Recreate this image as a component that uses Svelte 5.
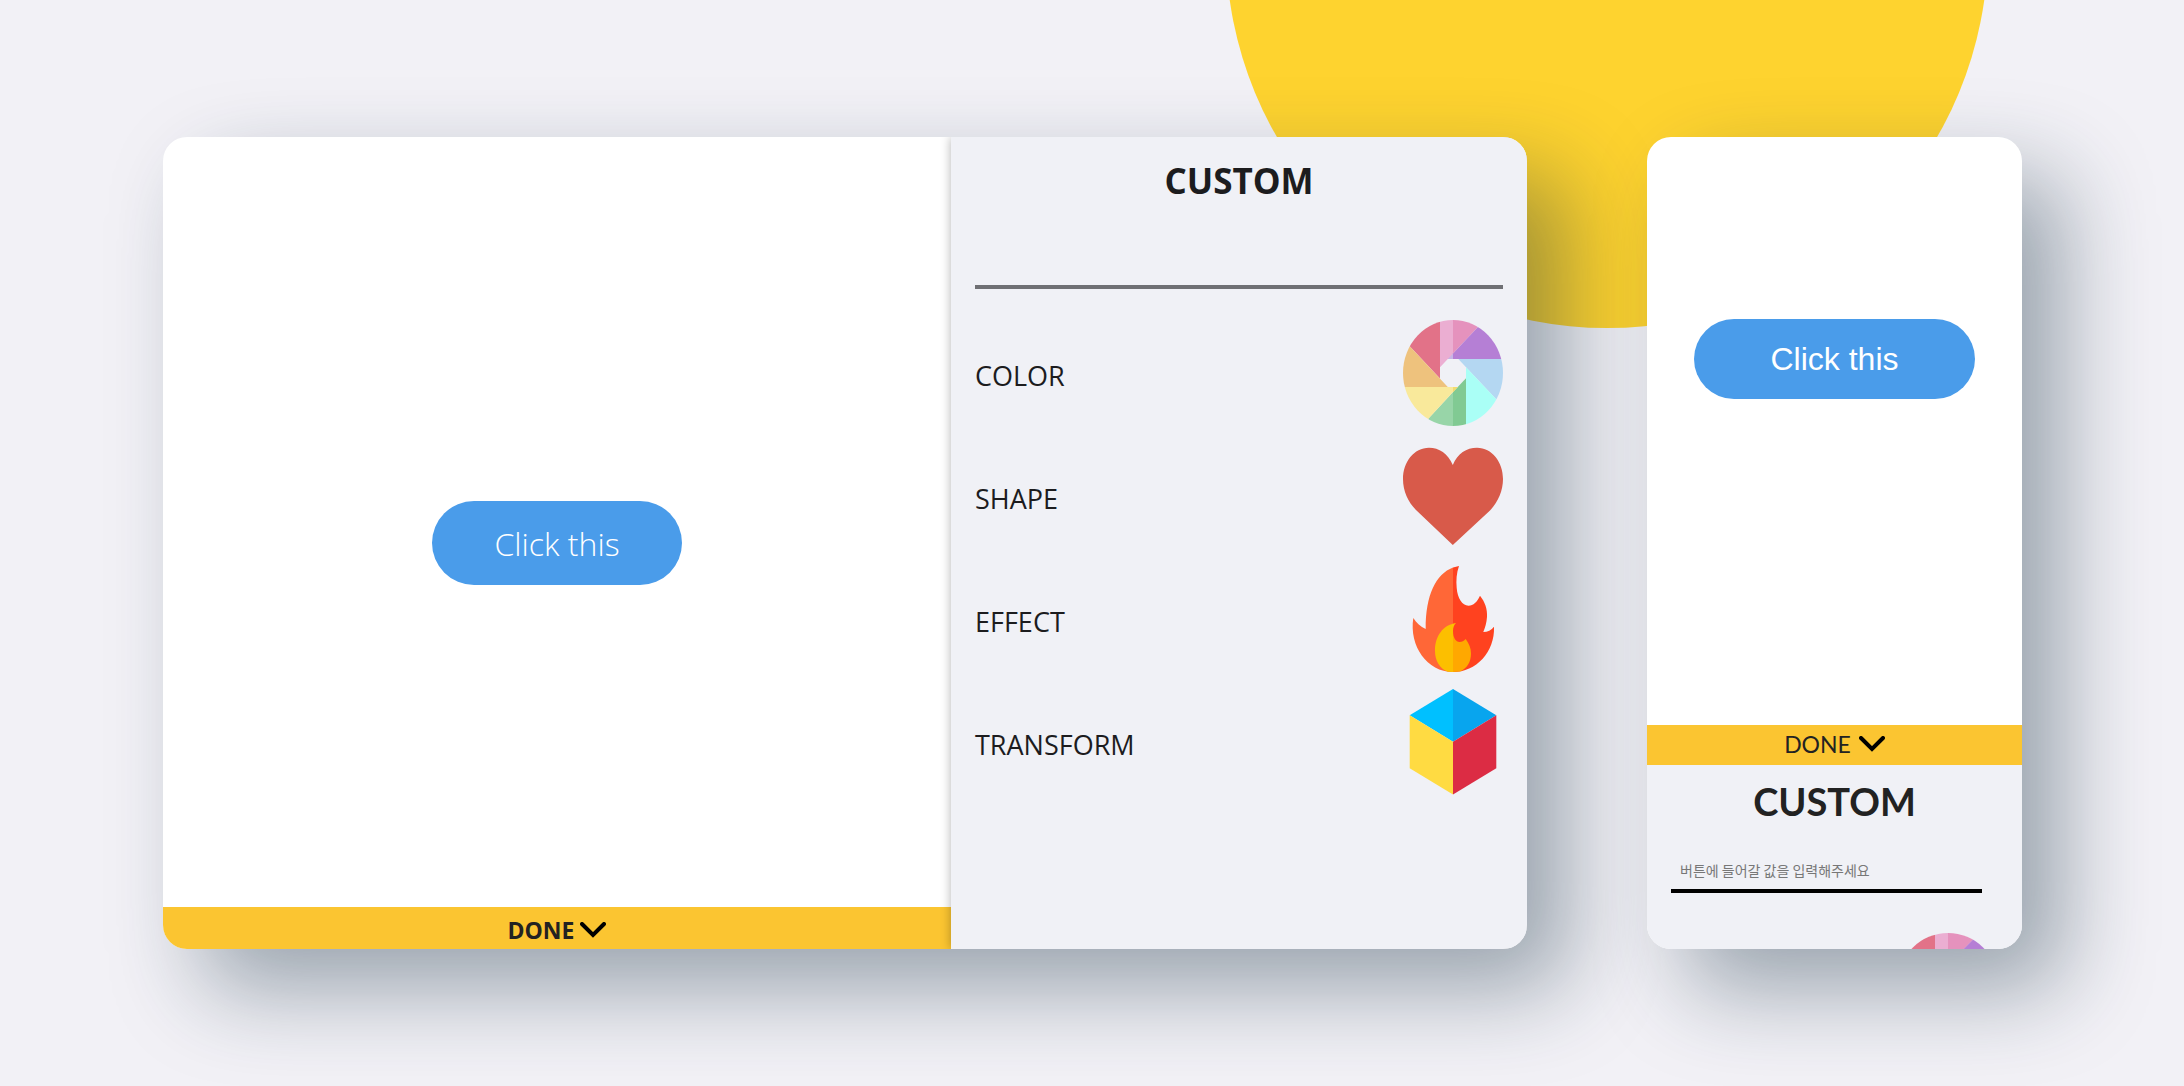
<script>
  let desktopLabel = $state('');
  let phoneLabel = $state('');

  const options = ['COLOR', 'SHAPE', 'EFFECT', 'TRANSFORM'];
</script>

{#snippet aperture()}
  <svg class="icon round" viewBox="0 0 100 106" preserveAspectRatio="none" aria-hidden="true">
    <path fill="#e27288" d="M0 0H37V58.5L6.7 26.3L0 19Z" />
    <path fill="#ebaed2" d="M37 0H50V39H44.8L37 47.3Z" />
    <path fill="#e592bd" d="M50 0H82L74.7 7.3L50 33.5Z" />
    <path fill="#c8b4e6" d="M50 33.5V39H44.8Z" />
    <path fill="#b57fd5" d="M50 33.5L82 -0.5H100V39H50Z" />
    <path fill="#b4d7f2" d="M55.3 39H100V86.5L93 79Z" />
    <path fill="#aafff6" d="M63 47.2L93 79L100 86.4V106H63Z" />
    <path fill="#81ca93" d="M63 58.3V106H50V72Z" />
    <path fill="#98d5a8" d="M50 72V106H18.5L25.3 98.7Z" />
    <path fill="#f9e99b" d="M0 67H50V72L25.3 98.7L18.5 106H0Z" />
    <path fill="#f2dc70" d="M50 67H54.9L50 72.2Z" />
    <path fill="#eec27d" d="M0 19L6.7 26.3L44.8 67H0Z" />
  </svg>
{/snippet}

{#snippet heart()}
  <svg class="icon" viewBox="0 0 100 106" aria-hidden="true">
    <path
      fill="#d85a4a"
      d="M49.8 22C45 10.500 36 4.700 26 4.700C11 4.700 0 19 0 36C0 48 5 59 13 67L49.800 102L87 67.500C95 59 100 48 100 36C100 19 89 4.700 74 4.700C63.500 4.700 54.500 10.500 49.800 22Z"
    />
  </svg>
{/snippet}

{#snippet flame()}
  <svg class="icon" viewBox="0 0 100 106" aria-hidden="true">
    <path
      fill="#ff421f"
      d="M50 1.500L56 0C53.500 7 53 14 53.700 22C54.500 32 59 39.700 65.500 39.700C70.500 39.700 74 36 77 29.700C82 36 84.500 43 84 51C83.600 57 82 62 80.300 66C84.500 66 88.500 64 91 60.700C92 86 73 106 50 106Z"
    />
    <path
      fill="#ff6737"
      d="M50 1.500C33 8 22.500 29 22.700 63C17.500 60.500 13.500 57 10.300 52C6 80 24 106 50 106Z"
    />
    <path
      fill="#ffa800"
      d="M50 58V65C50 72 53 76 56.500 76C59 76 61 75 62.700 73C66 77.500 68 82 68 87.500C68 96 64 102.500 57 105.500L50 106Z"
    />
    <path fill="#ff421f" d="M50 57.500L53.500 57C51.500 59 50.500 61 50 63Z" />
    <path fill="#fcbf00" d="M53 57C40 59 32 70 32 85C32 95 37 103 45 105.700L50 106V65C50 61.500 51 59 53 57Z" />
  </svg>
{/snippet}

{#snippet cube()}
  <svg class="icon" viewBox="0 0 100 106" aria-hidden="true">
    <path fill="#00c0ff" d="M50 0V52.700L6.700 26.300Z" />
    <path fill="#08a5ee" d="M50 0L93.300 26.300L50 52.700Z" />
    <path fill="#ffdb42" d="M6.700 26.300L50 52.700V105.500L6.700 79.300Z" />
    <path fill="#dc2c44" d="M93.300 26.300L50 52.700V105.500L93.300 79.300Z" />
  </svg>
{/snippet}

{#snippet chevron()}
  <svg class="chevron" viewBox="0 0 26 16" aria-hidden="true">
    <path d="M2 2L13 13L24 2" fill="none" stroke="#000" stroke-width="4" stroke-linecap="round" />
  </svg>
{/snippet}

<main class="page">
  <div class="sun"></div>

  <section class="card desktop">
    <div class="stage">
      <div class="preview">
        <button class="sample" type="button">{desktopLabel || 'Click this'}</button>
      </div>
      <button class="done" type="button">DONE {@render chevron()}</button>
    </div>
    <aside class="panel">
      <h2>CUSTOM</h2>
      <input type="text" aria-label="Button text" bind:value={desktopLabel} />
      <ul>
        {#each options as option}
          <li>
            <button class="option" type="button">
              <span>{option}</span>
              {#if option === 'COLOR'}
                {@render aperture()}
              {:else if option === 'SHAPE'}
                {@render heart()}
              {:else if option === 'EFFECT'}
                {@render flame()}
              {:else}
                {@render cube()}
              {/if}
            </button>
          </li>
        {/each}
      </ul>
    </aside>
  </section>

  <section class="card phone">
    <div class="preview">
      <button class="sample" type="button">{phoneLabel || 'Click this'}</button>
    </div>
    <button class="done" type="button">DONE {@render chevron()}</button>
    <aside class="panel">
      <h2>CUSTOM</h2>
      <input
        type="text"
        aria-label="Button text"
        placeholder="버튼에 들어갈 값을 입력해주세요"
        bind:value={phoneLabel}
      />
      <button class="option" type="button" aria-label="Color">{@render aperture()}</button>
    </aside>
  </section>
</main>

<style>
  :global(body) {
    margin: 0;
    background: #f2f1f6;
  }

  .page {
    position: relative;
    isolation: isolate;
    overflow: hidden;
    box-sizing: border-box;
    min-height: 100vh;
    padding: 137px 162px 137px 163px;
    display: grid;
    grid-template-columns: minmax(0, 1364fr) minmax(0, 375fr);
    gap: 120px;
    background: #f2f1f6;
    color: #1c1c1e;
    font-family: 'Open Sans', 'Noto Sans', 'Noto Sans CJK KR', sans-serif;
  }

  .sun {
    position: absolute;
    z-index: -1;
    top: -434px;
    right: 196px;
    width: 762px;
    height: 762px;
    border-radius: 50%;
    background: #fed32f;
  }

  .card {
    overflow: hidden;
    border-radius: 24px;
    background: #fff;
    box-shadow: 40px 40px 90px rgba(20, 47, 65, 0.4);
  }

  button {
    border: 0;
    padding: 0;
    font: inherit;
    color: inherit;
    cursor: pointer;
  }

  .desktop {
    display: grid;
    grid-template-columns: minmax(0, 788fr) minmax(0, 576fr);
  }

  .stage,
  .phone {
    display: flex;
    flex-direction: column;
  }

  .preview {
    flex: 1;
    display: flex;
    justify-content: center;
    align-items: center;
  }

  .desktop .preview {
    padding-top: 42px;
  }

  .phone .preview {
    align-items: flex-start;
    padding-top: 182px;
  }

  .sample {
    width: 250px;
    height: 84px;
    border-radius: 42px;
    background: #4a9cea;
    color: #fff;
    font-size: 32px;
    font-weight: 300;
  }

  .phone .sample {
    width: 75%;
    height: 80px;
    font-family: 'Liberation Sans', sans-serif;
    font-weight: 400;
  }

  .done {
    display: flex;
    justify-content: center;
    align-items: center;
    gap: 6px;
    height: 42px;
    padding-top: 4px;
    background: #fbc531;
    color: #222;
    font-size: 23px;
    font-weight: 700;
  }

  .phone .done {
    gap: 8px;
    height: 40px;
    padding-top: 0;
    padding-bottom: 2px;
    font-family: Lato, sans-serif;
    font-weight: 400;
  }

  .chevron {
    width: 26px;
    height: 16px;
  }

  .panel {
    box-sizing: border-box;
    padding: 20px 24px;
    background: #f0f1f6;
  }

  .desktop .panel {
    box-shadow: 0 0 10px rgba(0, 0, 0, 0.3);
  }

  .phone .panel {
    height: 184px;
    padding-top: 12px;
    padding-bottom: 0;
    overflow: hidden;
  }

  h2 {
    margin: 0;
    font-size: 35px;
    line-height: 48px;
    font-weight: 700;
    text-align: center;
  }

  .phone h2 {
    font-family: Lato, sans-serif;
    font-size: 38px;
    color: #222;
  }

  input {
    display: block;
    box-sizing: border-box;
    width: 100%;
    height: 60px;
    margin: 24px 0 31px;
    padding: 0 9px;
    border: 0;
    border-bottom: 4px solid #6f7074;
    background: transparent;
    color: inherit;
    font: 24px 'Open Sans', 'Noto Sans CJK KR', sans-serif;
    outline: 0;
  }

  .phone input {
    width: 95%;
    height: 40px;
    margin: 28px 0 40px;
    padding-bottom: 2px;
    border-bottom-color: #000;
    font: 14px 'Noto Sans CJK KR', sans-serif;
  }

  input::placeholder {
    color: #777;
    opacity: 1;
  }

  ul {
    display: grid;
    gap: 17px;
    margin: 0;
    padding: 0;
    list-style: none;
  }

  .option {
    display: flex;
    justify-content: space-between;
    align-items: center;
    width: 100%;
    background: none;
    font-size: 27px;
  }

  .option span {
    padding-top: 4px;
  }

  .icon {
    display: block;
    width: 100px;
    height: 106px;
  }

  .round {
    border-radius: 50%;
    overflow: hidden;
  }

  .phone .option {
    justify-content: flex-end;
  }

  .phone .icon {
    height: 100px;
  }
</style>
